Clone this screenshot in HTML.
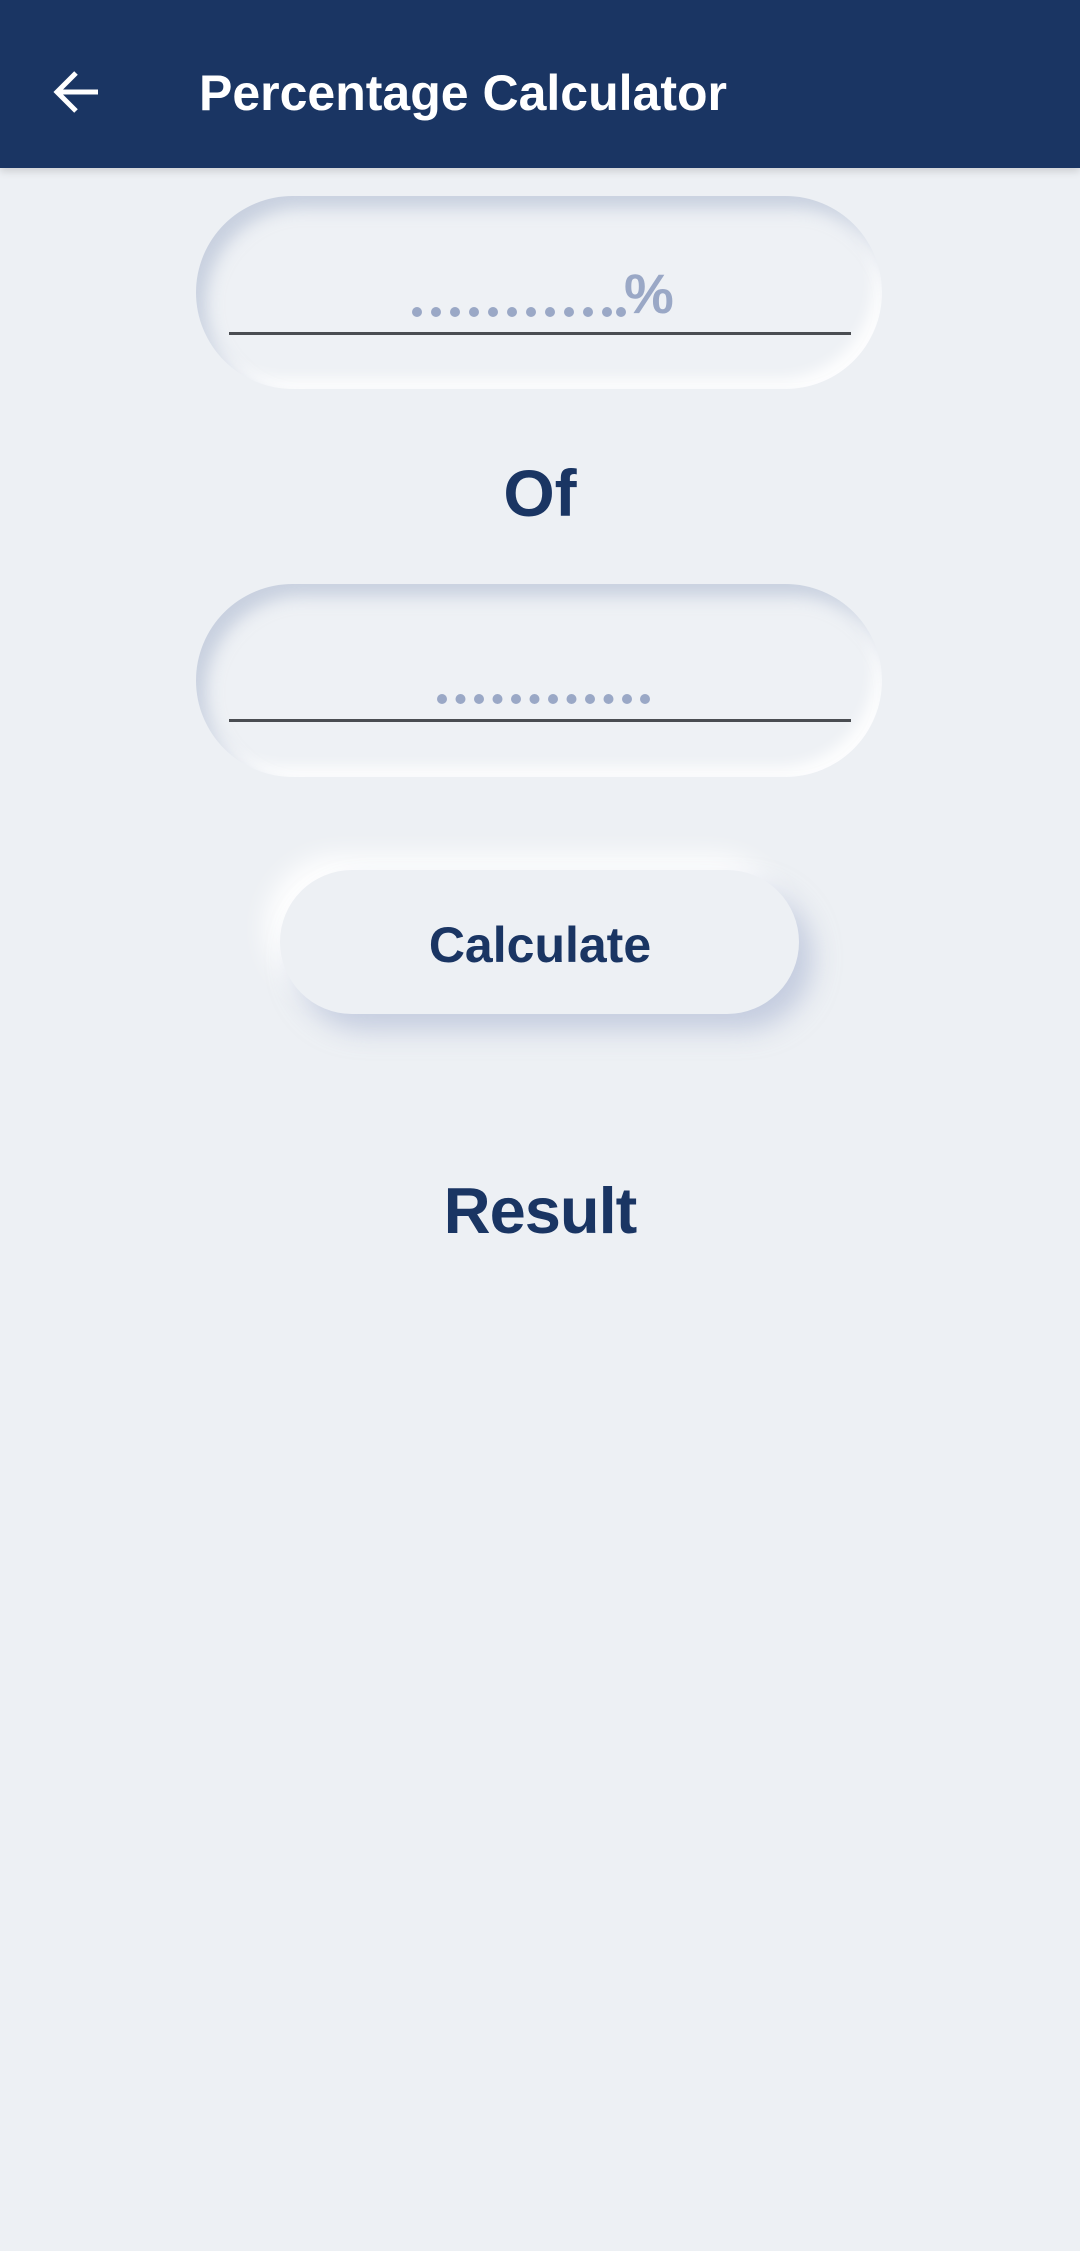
<!DOCTYPE html>
<html><head><meta charset="utf-8"><style>
html,body{margin:0;padding:0}
body{width:1080px;height:2251px;background:#edf0f4;position:relative;overflow:hidden;font-family:"Liberation Sans",sans-serif}
.hdr{position:absolute;left:0;top:0;width:1080px;height:168px;background:#1a3563;box-shadow:0 3px 8px rgba(0,0,0,0.15)}
.title{position:absolute;left:199px;top:68px;font-size:50px;font-weight:bold;color:#fff;line-height:1;letter-spacing:0px}
.pill{position:absolute;left:196px;width:686px;height:193px;border-radius:97px;background:#eef1f5;box-shadow:inset 10px 12px 16px rgba(170,182,205,0.55),inset -8px -10px 14px rgba(255,255,255,0.9)}
.line{position:absolute;left:229px;width:622px;height:3px;background:#4a4d52}
.txt{position:absolute;left:0;width:1080px;text-align:center;color:#1a3563;line-height:1}
.btn{position:absolute;left:280px;top:870px;width:519px;height:144px;border-radius:72px;background:#edf0f4;box-shadow:14px 16px 26px rgba(170,182,210,0.6),-14px -14px 26px rgba(255,255,255,1)}
</style></head><body>
<div class="hdr">
<svg style="position:absolute;left:52px;top:68px" width="50" height="48" viewBox="0 0 50 48"><path d="M46 24H6M24 5L5 24l19 19" fill="none" stroke="#fff" stroke-width="5"/></svg>
<div class="title">Percentage Calculator</div>
</div>
<div class="pill" style="top:196px"></div>
<div class="line" style="top:332px"></div>
<svg style="position:absolute;left:405px;top:300px" width="280" height="25">
<g fill="#9aa8c6"><circle cx="12" cy="12" r="5"/><circle cx="31" cy="12" r="5"/><circle cx="50" cy="12" r="5"/><circle cx="69" cy="12" r="5"/><circle cx="88" cy="12" r="5"/><circle cx="107" cy="12" r="5"/><circle cx="126" cy="12" r="5"/><circle cx="145" cy="12" r="5"/><circle cx="164" cy="12" r="5"/><circle cx="183" cy="12" r="5"/><circle cx="202" cy="12" r="5"/><circle cx="216" cy="12" r="5"/></g></svg>
<div style="position:absolute;left:624px;top:266px;font-size:56px;color:#9aa8c6;font-weight:bold;line-height:1">%</div>
<div class="txt" style="top:460px;font-size:66px;font-weight:bold">Of</div>
<div class="pill" style="top:584px"></div>
<div class="line" style="top:719px"></div>
<svg style="position:absolute;left:430px;top:687px" width="230" height="25">
<g fill="#9aa8c6"><circle cx="12" cy="12" r="5"/><circle cx="30.5" cy="12" r="5"/><circle cx="49" cy="12" r="5"/><circle cx="67.5" cy="12" r="5"/><circle cx="86" cy="12" r="5"/><circle cx="104.5" cy="12" r="5"/><circle cx="123" cy="12" r="5"/><circle cx="141.5" cy="12" r="5"/><circle cx="160" cy="12" r="5"/><circle cx="178.5" cy="12" r="5"/><circle cx="197" cy="12" r="5"/><circle cx="215" cy="12" r="5"/></g></svg>
<div class="btn"></div>
<div class="txt" style="top:920px;font-size:50px;font-weight:bold">Calculate</div>
<div class="txt" style="top:1178px;font-size:65px;font-weight:bold;letter-spacing:-1px">Result</div>
</body></html>
